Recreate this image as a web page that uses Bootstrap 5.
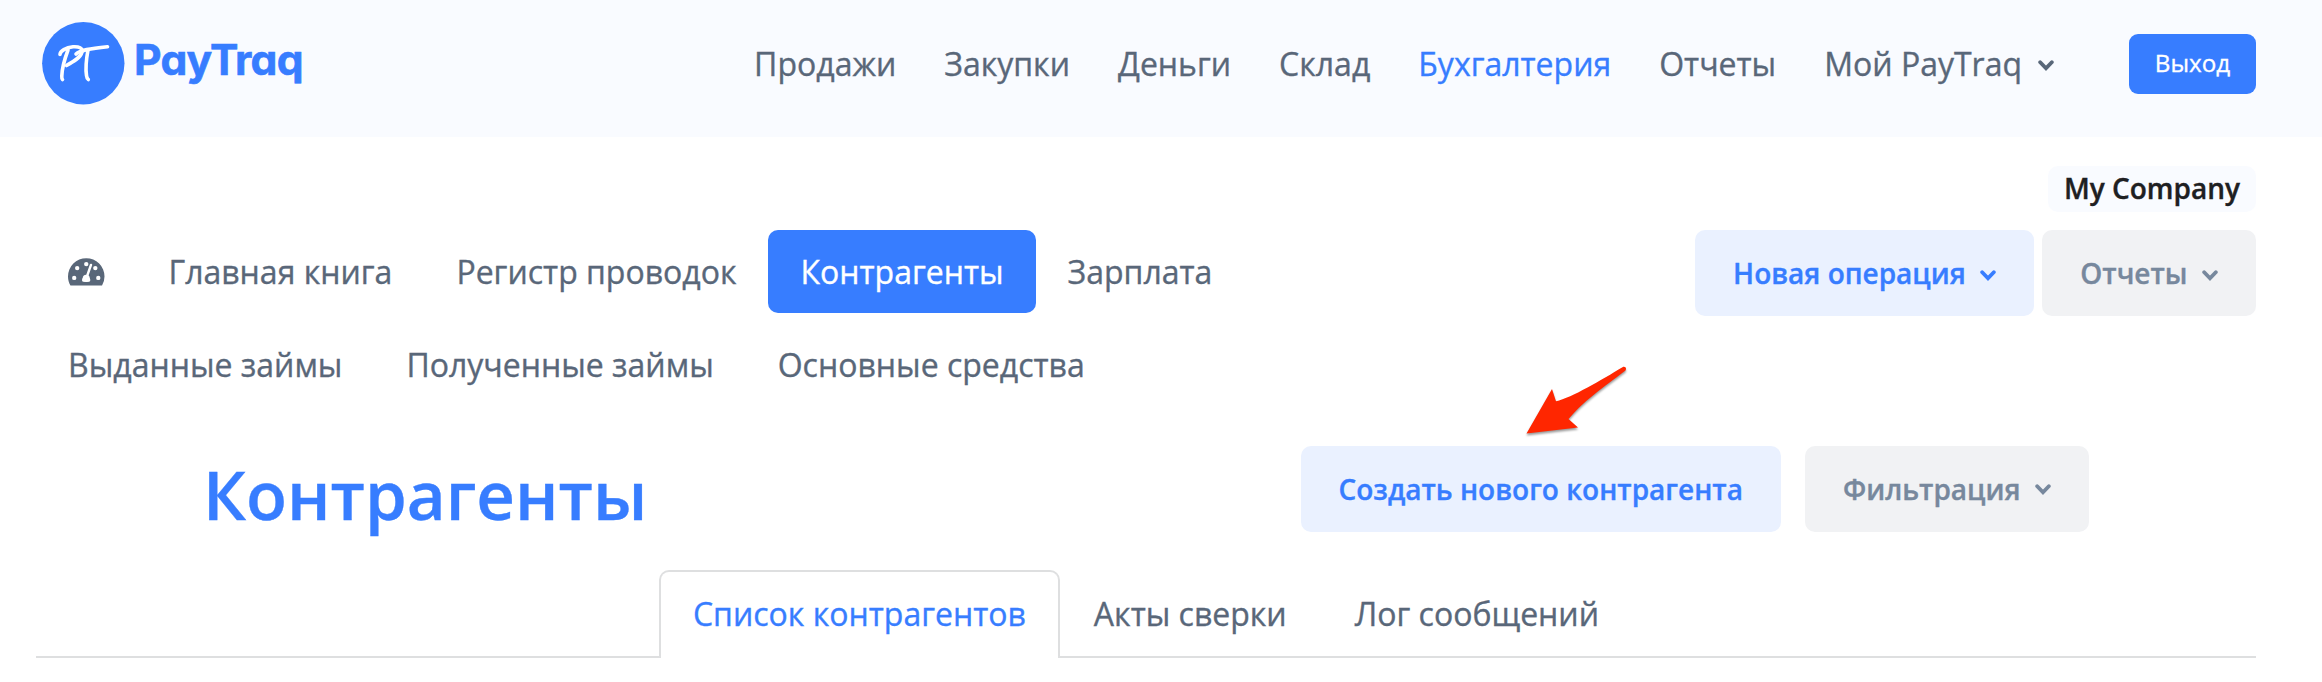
<!DOCTYPE html>
<html lang="ru">
<head>
<meta charset="utf-8">
<title>PayTraq</title>
<meta name="viewport" content="width=device-width, initial-scale=1">
<link href="https://cdn.jsdelivr.net/npm/bootstrap@5.3.0/dist/css/bootstrap.min.css" rel="stylesheet">
<style>
:root{--pt-blue:#377dff;--pt-slate:#596779;--pt-gray:#77889d}
body{font-family:"Open Sans","Noto Sans",sans-serif;font-size:32px;color:var(--pt-slate);background:#fff;overflow:hidden;-webkit-text-stroke:.35px currentColor}
svg{display:block;flex:none}
.pt-header{height:137px;background:#f9fbff;padding:0 66px 0 36px}
.pt-header .nav-link{padding:0 24px;font-size:32px;line-height:48px;color:var(--pt-slate)}
.pt-header .nav-link.active{color:var(--pt-blue)}
.pt-menu{height:127px}
.btn-exit{width:127px;height:60px;padding:0;background:var(--pt-blue);color:#fff;font-size:24.2px;border:0;border-radius:9px;margin-left:51px}
.pt-main{padding:0 66px 0 36px}
.company{margin-top:29px;height:46px;width:208px;background:#f9fbff;border-radius:10px;color:#1e2022;font-size:28px;font-weight:600;line-height:44px}
.pt-tools{margin-top:18px}
.pt-pills{width:1300px}
.pt-pills .nav-link{height:83px;padding:0 32px;line-height:83px;color:var(--pt-slate);border-radius:10px;margin-bottom:10px}
.pt-pills .nav-link.active{background:var(--pt-blue);color:#fff}
.btn-soft{height:86px;padding:0 38px;border:0;border-radius:10px;font-size:28px;font-weight:600}
.btn-soft svg{margin-left:14.5px}
.btn-soft-blue,.btn-soft-blue:hover{background:#eaf1ff;color:var(--pt-blue)}
.btn-soft-gray,.btn-soft-gray:hover{background:#f1f2f4;color:var(--pt-gray)}
.pt-title{height:86px;margin-top:30px;padding:0 167px 0 164px}
.pt-title h1{margin:0 0 0 3px;font-size:67.2px;font-weight:600;line-height:96px;color:var(--pt-blue)}
.pt-arrow{position:absolute;left:222px;top:-83px}
.pt-tabs{margin-top:38px;height:88px;border-bottom:2px solid #dedfe0}
.pt-tabs .nav-link{height:88px;border:2px solid transparent;border-bottom:0;border-radius:10px 10px 0 0;padding:0 32px;line-height:84px;color:var(--pt-slate);margin:0}
.pt-tabs .nav-link.active{border-color:#dedfe0;background:#fff;color:var(--pt-blue)}
</style>
</head>
<body>
<header class="pt-header d-flex align-items-start">
  <a href="#" class="d-block" aria-label="PayTraq">
    <svg width="280" height="137" viewBox="36 0 280 137">
      <circle cx="83.3" cy="63.3" r="41.2" fill="#377dff"/>
      <g fill="none" stroke="#fff" stroke-width="3.6" stroke-linecap="round" stroke-linejoin="round">
        <path d="M60 54.500C60 51 66 47.500 73 46.800C79 46.400 83 48 82 52C80.500 58 73 62 66.500 65.500"/>
        <path d="M68 50C65 58 62 69 61.800 76C61.700 78 62 79 62.500 79.500"/>
        <path d="M76 54C80 50 90 48.500 107.500 46.700"/>
        <path d="M88 50C86.500 58 85.500 69 86.500 75.500C86.800 78 87.500 79 88.300 79.500"/>
      </g>
      <text x="134" y="75" font-family="Inter,sans-serif" font-size="42.600" font-weight="700" fill="#377dff" stroke="#377dff" stroke-width=".6" textLength="169.500" lengthAdjust="spacing" style="font-feature-settings:'cv11'">PayTraq</text>
    </svg>
  </a>
  <div class="pt-menu d-flex align-items-center ms-auto">
    <nav class="nav flex-nowrap">
      <a class="nav-link" href="#">Продажи</a>
      <a class="nav-link" href="#">Закупки</a>
      <a class="nav-link" href="#">Деньги</a>
      <a class="nav-link" href="#">Склад</a>
      <a class="nav-link active" href="#">Бухгалтерия</a>
      <a class="nav-link" href="#">Отчеты</a>
      <a class="nav-link d-flex align-items-center" href="#">Мой PayTraq
        <svg class="ms-3 mt-1" width="16" height="11" viewBox="0 0 16 11"><path d="M2.200 2.200 8 8.200l5.800-6" fill="none" stroke="currentColor" stroke-width="3.800" stroke-linecap="round"/></svg></a>
    </nav>
    <button class="btn btn-exit" type="button">Выход</button>
  </div>
</header>
<main class="pt-main">
  <div class="d-flex justify-content-end"><div class="company text-center">My Company</div></div>
  <div class="pt-tools d-flex justify-content-between align-items-start">
    <ul class="nav nav-pills pt-pills">
      <li class="nav-item"><a class="nav-link d-flex align-items-center" href="#" aria-label="Панель">
        <svg width="36.500" height="28" viewBox="0 0 37 28"><path d="M18.500 0A18.500 18.500 0 0 0 0 18.500c0 3.400.9 6.500 2.500 9.100h32A17.500 17.500 0 0 0 37 18.500 18.500 18.500 0 0 0 18.500 0Z" fill="#596779"/><g fill="#fff"><circle cx="18.500" cy="6" r="2.200"/><circle cx="9.300" cy="10" r="2.200"/><circle cx="27.700" cy="10" r="2.200"/><circle cx="6.300" cy="20" r="2.200"/><circle cx="30.700" cy="20" r="2.200"/><circle cx="18.500" cy="20.500" r="3.600"/><rect x="14.300" y="20" width="8.200" height="4" rx="1.500"/></g><path d="M18.700 20 23.300 6.800" stroke="#fff" stroke-width="2.500" stroke-linecap="round"/></svg></a></li>
      <li class="nav-item"><a class="nav-link" href="#">Главная книга</a></li>
      <li class="nav-item"><a class="nav-link" href="#">Регистр проводок</a></li>
      <li class="nav-item"><a class="nav-link active" href="#">Контрагенты</a></li>
      <li class="nav-item"><a class="nav-link" href="#">Зарплата</a></li>
      <li class="w-100"></li>
      <li class="nav-item"><a class="nav-link" href="#">Выданные займы</a></li>
      <li class="nav-item"><a class="nav-link" href="#">Полученные займы</a></li>
      <li class="nav-item"><a class="nav-link" href="#">Основные средства</a></li>
    </ul>
    <div class="d-flex gap-2">
      <button class="btn btn-soft btn-soft-blue d-flex align-items-center" type="button">Новая операция
        <svg class="mt-1" width="16" height="11" viewBox="0 0 16 11"><path d="M2.200 2.200 8 8.200l5.800-6" fill="none" stroke="currentColor" stroke-width="3.800" stroke-linecap="round"/></svg></button>
      <button class="btn btn-soft btn-soft-gray d-flex align-items-center" type="button">Отчеты
        <svg class="mt-1" width="16" height="11" viewBox="0 0 16 11"><path d="M2.200 2.200 8 8.200l5.800-6" fill="none" stroke="currentColor" stroke-width="3.800" stroke-linecap="round"/></svg></button>
    </div>
  </div>
  <div class="pt-title d-flex justify-content-between align-items-start">
    <h1>Контрагенты</h1>
    <div class="d-flex gap-4 position-relative">
      <button class="btn btn-soft btn-soft-blue" type="button">Создать нового контрагента</button>
      <button class="btn btn-soft btn-soft-gray d-flex align-items-center" type="button">Фильтрация
        <svg width="16" height="11" viewBox="0 0 16 11"><path d="M2.200 2.200 8 8.200l5.800-6" fill="none" stroke="currentColor" stroke-width="3.800" stroke-linecap="round"/></svg></button>
      <svg class="pt-arrow" width="110" height="80" viewBox="0 0 110 80" style="filter:drop-shadow(0 2px 1px #0006)"><path d="M3.500 70.500 29 26l4 12.300C49 34.500 79 16.500 99.500 4.200c2.500-1.200 4.500.8 3 3.200C89 18 62 36 45.500 56L55 64.500Z" fill="#ff2600"/></svg>
    </div>
  </div>
  <ul class="nav nav-tabs pt-tabs justify-content-center">
    <li class="nav-item"><a class="nav-link active" href="#">Список контрагентов</a></li>
    <li class="nav-item"><a class="nav-link" href="#">Акты сверки</a></li>
    <li class="nav-item"><a class="nav-link" href="#">Лог сообщений</a></li>
  </ul>
</main>
<script src="https://cdn.jsdelivr.net/npm/bootstrap@5.3.0/dist/js/bootstrap.bundle.min.js"></script>
</body>
</html>
